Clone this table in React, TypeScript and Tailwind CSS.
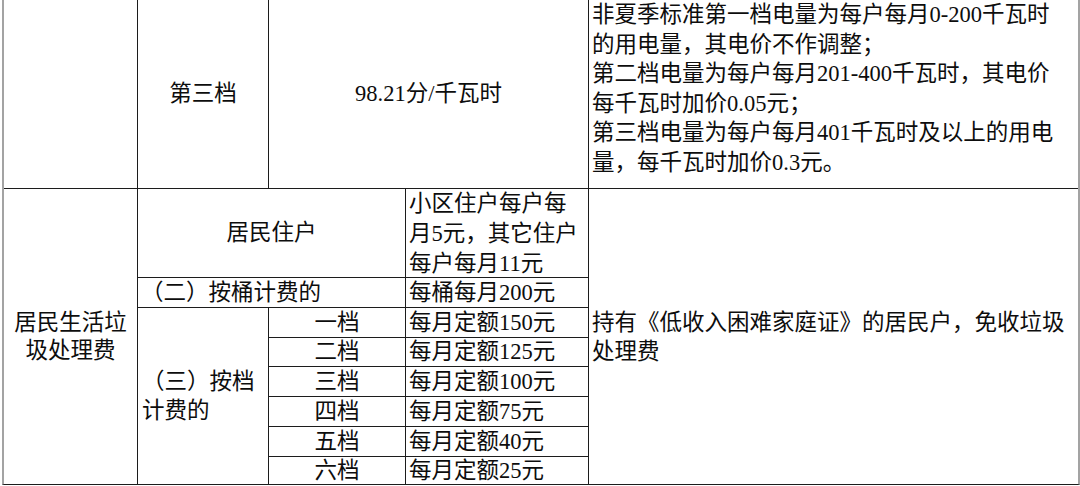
import React from 'react';

const tiers = [
  { name: '一档', amount: '每月定额150元' },
  { name: '二档', amount: '每月定额125元' },
  { name: '三档', amount: '每月定额100元' },
  { name: '四档', amount: '每月定额75元' },
  { name: '五档', amount: '每月定额40元' },
  { name: '六档', amount: '每月定额25元' },
];

const tierRows = ['row-start-4', 'row-start-5', 'row-start-6', 'row-start-7', 'row-start-8', 'row-start-9'];

const electricNotes = [
  '非夏季标准第一档电量为每户每月0-200千瓦时',
  '的用电量，其电价不作调整；',
  '第二档电量为每户每月201-400千瓦时，其电价',
  '每千瓦时加价0.05元；',
  '第三档电量为每户每月401千瓦时及以上的用电',
  '量，每千瓦时加价0.3元。',
];

const cell = 'bg-white flex items-center';

const App: React.FC = () => {
  return (
    <div className="w-[1080px] h-[486px] bg-white overflow-hidden">
      <div className="ml-[2px] w-[1078px] border-x-2 border-b border-x-[#a3a3a3] border-b-[#1c1c1c] bg-[#1c1c1c] grid gap-px grid-cols-[133px_130px_136px_182px_489px] grid-rows-[188px_88px_29px_29px_28px_29px_29px_29px_27px] font-['Liberation_Serif','Noto_Sans_CJK_SC',serif] text-[22.5px] leading-[29.6px] text-[#0d0d0d]">
        {/* 电费 第三档 */}
        <div className={`${cell} col-start-1 row-start-1`} />
        <div className={`${cell} col-start-2 row-start-1 justify-center`}>第三档</div>
        <div className={`${cell} col-start-3 col-span-2 row-start-1 justify-center`}>98.21分/千瓦时</div>
        <div className="bg-white col-start-5 row-start-1 pl-[3px]">
          {electricNotes.map((line) => (
            <div key={line} className="whitespace-nowrap">{line}</div>
          ))}
        </div>

        {/* 垃圾处理费 */}
        <div className={`${cell} col-start-1 row-start-2 row-span-8 flex-col justify-center text-center leading-[28px]`}>
          <span>居民生活垃</span>
          <span>圾处理费</span>
        </div>
        <div className={`${cell} col-start-2 col-span-2 row-start-2 justify-center`}>居民住户</div>
        <div className="bg-white col-start-4 row-start-2 pl-[3px] pt-[2px] flex flex-col justify-center leading-[30px]">
          <span className="whitespace-nowrap">小区住户每户每</span>
          <span className="whitespace-nowrap">月5元，其它住户</span>
          <span className="whitespace-nowrap">每户每月11元</span>
        </div>
        <div className={`${cell} col-start-5 row-start-2 row-span-8 pl-[3px]`}>
          <div className="leading-[29px]">
            <div className="whitespace-nowrap">持有《低收入困难家庭证》的居民户，免收垃圾</div>
            <div>处理费</div>
          </div>
        </div>

        <div className={`${cell} col-start-2 col-span-2 row-start-3 pl-[3px]`}>（二）按桶计费的</div>
        <div className={`${cell} col-start-4 row-start-3 pl-[3px]`}>每桶每月200元</div>

        <div className={`${cell} col-start-2 row-start-4 row-span-6 pl-[4px]`}>
          <div className="leading-[29px]">
            <div>（三）按档</div>
            <div>计费的</div>
          </div>
        </div>
        {tiers.map((t, i) => (
          <React.Fragment key={t.name}>
            <div className={`${cell} col-start-3 ${tierRows[i]} justify-center`}>{t.name}</div>
            <div className={`${cell} col-start-4 ${tierRows[i]} pl-[3px]`}>{t.amount}</div>
          </React.Fragment>
        ))}
      </div>
    </div>
  );
};

export default App;
